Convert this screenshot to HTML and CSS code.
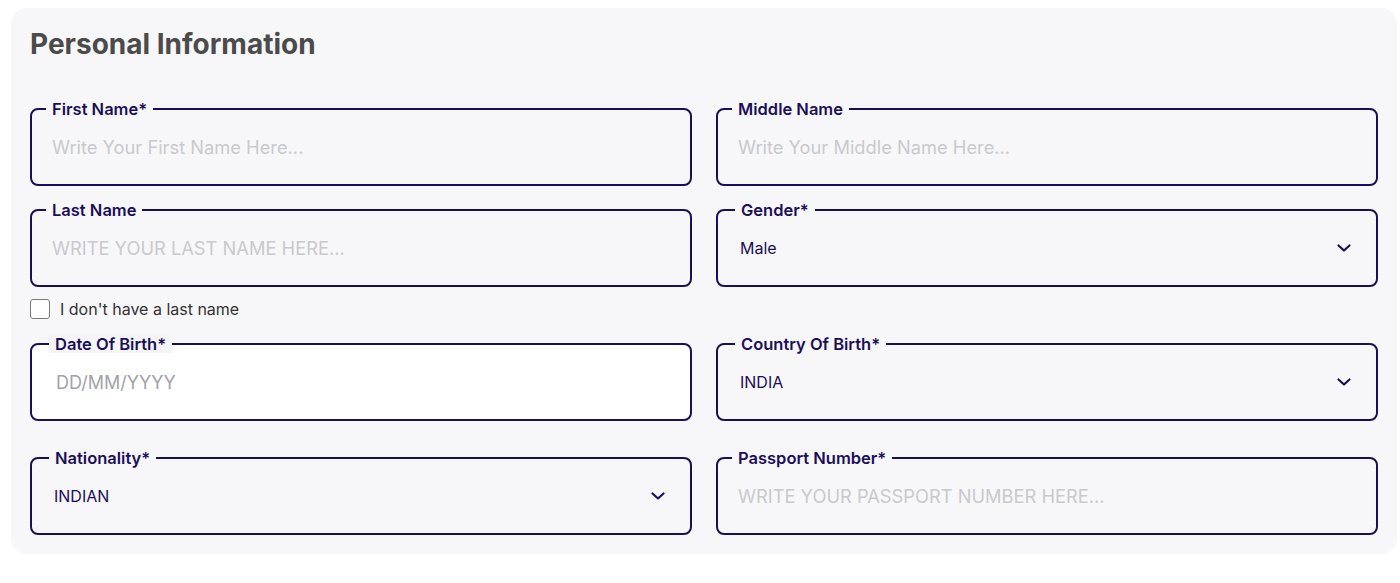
FILE: index.html
```html
<!DOCTYPE html>
<html lang="en">
<head>
<meta charset="utf-8">
<title>Personal Information</title>
<link rel="stylesheet" href="styles.css">
</head>
<body>
<section class="card">
  <h2 class="title">Personal Information</h2>
  <div class="grid">
    <fieldset class="field">
      <legend class="label">First Name*</legend>
      <input class="input" type="text" placeholder="Write Your First Name Here...">
    </fieldset>
    <fieldset class="field">
      <legend class="label">Middle Name</legend>
      <input class="input" type="text" placeholder="Write Your Middle Name Here...">
    </fieldset>

    <fieldset class="field">
      <legend class="label">Last Name</legend>
      <input class="input upper" type="text" placeholder="WRITE YOUR LAST NAME HERE...">
    </fieldset>
    <fieldset class="field shift">
      <legend class="label">Gender*</legend>
      <div class="select">
        <span class="value">Male</span>
        <svg class="chev" viewBox="0 0 14 8" width="14" height="8"><path d="M1.5 1.5 L7 6.5 L12.5 1.5" fill="none" stroke="#1c0f5a" stroke-width="2.2" stroke-linecap="round" stroke-linejoin="round"/></svg>
      </div>
    </fieldset>

    <label class="check">
      <span class="box"></span>
      <span class="check-text">I don't have a last name</span>
    </label>
    <div class="spacer"></div>

    <fieldset class="field shift white">
      <legend class="label">Date Of Birth*</legend>
      <input class="input date" type="text" placeholder="DD/MM/YYYY">
    </fieldset>
    <fieldset class="field shift">
      <legend class="label">Country Of Birth*</legend>
      <div class="select">
        <span class="value">INDIA</span>
        <svg class="chev" viewBox="0 0 14 8" width="14" height="8"><path d="M1.5 1.5 L7 6.5 L12.5 1.5" fill="none" stroke="#1c0f5a" stroke-width="2.2" stroke-linecap="round" stroke-linejoin="round"/></svg>
      </div>
    </fieldset>

    <fieldset class="field shift row4">
      <legend class="label">Nationality*</legend>
      <div class="select">
        <span class="value">INDIAN</span>
        <svg class="chev" viewBox="0 0 14 8" width="14" height="8"><path d="M1.5 1.5 L7 6.5 L12.5 1.5" fill="none" stroke="#1c0f5a" stroke-width="2.2" stroke-linecap="round" stroke-linejoin="round"/></svg>
      </div>
    </fieldset>
    <fieldset class="field row4">
      <legend class="label">Passport Number*</legend>
      <input class="input upper" type="text" placeholder="WRITE YOUR PASSPORT NUMBER HERE...">
    </fieldset>
  </div>
</section>
</body>
</html>
```

FILE: styles.css
```css
* { box-sizing: border-box; }

html, body {
  margin: 0;
  background: #ffffff;
}

body {
  padding: 8px 3px 0 11px;
  font-family: Inter, "Noto Sans", "Liberation Sans", sans-serif;
}

.card {
  background: #f7f7fa;
  border-radius: 16px;
  padding: 19px 19px 19px 19px;
}

.title {
  margin: 0 0 39px 0;
  font-size: 28px;
  line-height: 34px;
  font-weight: 700;
  color: #4b4b4b;
  letter-spacing: 0;
}

.grid {
  display: grid;
  grid-template-columns: 1fr 1fr;
  column-gap: 24px;
  row-gap: 15px;
}

.field {
  margin: 0;
  padding: 0 14px 8px 14px;
  border: 2px solid #1c0f5a;
  border-radius: 8px;
  min-width: 0;
  height: 86px;
}

.field.white {
  background: #ffffff;
}

.label {
  padding: 0 6px;
  font-size: 16.5px;
  line-height: 18px;
  font-weight: 600;
  color: #1c0f5a;
}

.field.shift .label {
  margin-left: 3px;
}

.field.white .label {
  background: #f5f5f8;
}

.input {
  display: block;
  width: 100%;
  height: 58px;
  border: 0;
  outline: 0;
  background: transparent;
  padding: 0 6px;
  font-family: inherit;
  font-size: 18.3px;
  color: #1c0f5a;
}

.input::placeholder {
  color: #c9c9cc;
}

.input.date {
  padding-left: 10px;
  font-size: 18px;
}

.input.date::placeholder {
  color: #a2a2aa;
}

.select {
  display: flex;
  align-items: center;
  justify-content: space-between;
  height: 58px;
  padding: 0 11px 0 8px;
}

.value {
  font-size: 16px;
  color: #1c0f5a;
}

.chev {
  display: block;
}

.check {
  display: flex;
  align-items: center;
  gap: 10px;
  margin-top: -4px;
  height: 22px;
  margin-bottom: 0;
}

.box {
  width: 20px;
  height: 20px;
  border: 1.5px solid #7a7a7a;
  border-radius: 3px;
  background: #ffffff;
}

.check-text {
  font-size: 16px;
  color: #333333;
}

.row4 {
  margin-top: 13px;
}
```
